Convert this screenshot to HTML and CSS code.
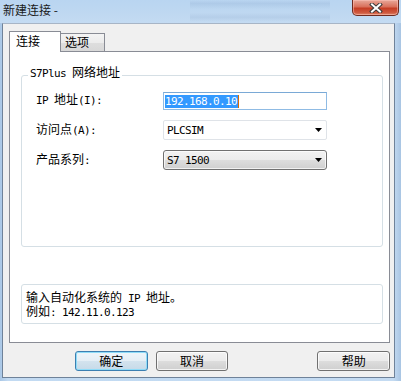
FILE: index.html
```html
<!DOCTYPE html>
<html lang="zh">
<head>
<meta charset="utf-8">
<title>新建连接</title>
<link rel="stylesheet" href="styles.css">
</head>
<body>
<div class="window">
  <div class="titlebar">
    <span class="title">新建连接 -</span>
    <div class="close">
      <svg width="14" height="10" viewBox="0 0 14 10">
        <path d="M3 1.5 L11 8.5 M11 1.5 L3 8.5" stroke="#3b3b3b" stroke-width="4" stroke-linecap="square" fill="none"/>
        <path d="M3 1.5 L11 8.5 M11 1.5 L3 8.5" stroke="#ffffff" stroke-width="2" stroke-linecap="square" fill="none"/>
      </svg>
    </div>
  </div>
  <div class="client">
    <div class="tabs">
      <div class="tab active">连接</div>
      <div class="tab">选项</div>
    </div>
    <div class="panel">
      <fieldset class="group">
        <legend><span class="m">S7Plus </span>网络地址</legend>
        <div class="row first">
          <span class="label"><span class="m">IP </span>地址<span class="m">(I):</span></span>
          <div class="field ip"><span class="sel m">192.168.0.10</span><span class="caret"></span></div>
        </div>
        <div class="row">
          <span class="label">访问点<span class="m">(A):</span></span>
          <div class="field combo"><span class="m">PLCSIM</span>
            <svg class="arrow" width="7" height="4" viewBox="0 0 7 4"><polygon points="0,0 7,0 3.5,4" fill="#000"/></svg>
          </div>
        </div>
        <div class="row">
          <span class="label">产品系列<span class="m">:</span></span>
          <div class="field combo raised"><span class="m">S7 1500</span>
            <svg class="arrow" width="7" height="4" viewBox="0 0 7 4"><polygon points="0,0 7,0 3.5,4" fill="#000"/></svg>
          </div>
        </div>
      </fieldset>
      <div class="info">
        <div class="line">输入自动化系统的<span class="m"> IP </span>地址。</div>
        <div class="line">例如<span class="m">: 142.11.0.123</span></div>
      </div>
    </div>
    <div class="buttons">
      <button class="btn default">确定</button>
      <button class="btn">取消</button>
      <button class="btn help">帮助</button>
    </div>
  </div>
</div>
</body>
</html>
```

FILE: styles.css
```css
* { box-sizing: border-box; }

body {
  margin: 0;
  font-family: "Noto Sans CJK SC", "Noto Sans", sans-serif;
  font-size: 12px;
  color: #000;
}

.m {
  font-family: "DejaVu Sans Mono", "Liberation Mono", monospace;
  font-size: 11px;
  letter-spacing: -0.62px;
}

.window {
  width: 401px;
  height: 381px;
  background: linear-gradient(90deg, #a9c7e6 0%, #c2daf2 2%, #c4dbf2 98%, #a9c5e3 100%);
  display: flex;
  flex-direction: column;
  overflow: hidden;
}

.titlebar {
  height: 23px;
  display: flex;
  justify-content: space-between;
  align-items: flex-start;
  background:
    linear-gradient(180deg, rgba(120,150,190,0) 0%, rgba(120,150,190,0.18) 15%, rgba(120,150,190,0) 40%, rgba(120,150,190,0) 55%, rgba(120,150,190,0.16) 75%, rgba(120,150,190,0) 95%) 190px 0 / 140px 23px no-repeat,
    linear-gradient(180deg, #b9d5f1 0%, #bfd8f1 60%, #c4dbf2 100%);
}

.title {
  padding: 2px 0 0 3px;
  line-height: 16px;
  font-size: 12px;
  color: #1a1a1a;
}

.close {
  width: 47px;
  height: 16px;
  margin-right: 2px;
  border: 1px solid #6e2b20;
  border-top: none;
  border-radius: 0 0 5px 5px;
  background: linear-gradient(180deg, #e8a89a 0%, #d9705b 45%, #c53d24 55%, #cf5a40 85%, #e08a6c 100%);
  display: flex;
  align-items: center;
  justify-content: center;
  box-shadow: inset 0 0 0 1px rgba(255,200,190,0.5);
}

.client {
  margin-left: 2px;
  width: 393px;
  height: 355px;
  background: #f0f0f0;
  border: 1px solid #6f8299;
  border-top-color: #a7b5c6;
  padding: 7px 4px 0 6px;
}

.tabs {
  display: flex;
  align-items: flex-start;
  height: 20px;
  position: relative;
  z-index: 1;
}

.tab {
  height: 18px;
  margin-top: 2px;
  width: 44px;
  border: 1px solid #898c95;
  border-left: none;
  border-bottom: none;
  background: linear-gradient(180deg, #f4f4f4 0%, #ececec 50%, #dedede 51%, #d8d8d8 100%);
  padding-left: 4px;
  line-height: 16px;
}

.tab.active {
  height: 21px;
  margin-top: 0;
  width: 52px;
  border-left: 1px solid #898c95;
  background: #fff;
  padding-left: 6px;
  padding-top: 1px;
  line-height: 16px;
}

.panel {
  width: 381px;
  height: 292px;
  background: #fff;
  border: 1px solid #898c95;
  padding: 14px 6px 0 11px;
}

.group {
  margin: 0;
  border: 1px solid #d5dfe5;
  border-radius: 3px;
  padding: 0 0 76px 0;
  min-width: 0;
}

.group legend {
  margin-left: 6px;
  padding: 0 2px 4px;
  line-height: 12px;
  font-size: 12px;
}

.row {
  display: flex;
  align-items: center;
  height: 20px;
  margin-top: 10px;
  padding-left: 14px;
}

.row.first {
  margin-top: 6px;
}

.label {
  width: 127px;
  line-height: 14px;
}

.field {
  width: 164px;
  height: 20px;
  display: flex;
  align-items: center;
  padding-left: 3px;
  background: #fff;
}

.ip {
  height: 18px;
  align-self: flex-end;
  border: 1px solid #8fbbe4;
  border-top-color: #7aa9d6;
  padding-left: 1px;
}

.sel {
  background: #3399ff;
  color: #fff;
  line-height: 13px;
  height: 13px;
  padding-right: 1px;
}

.caret {
  width: 1px;
  height: 13px;
  background: #d96b00;
}

.combo {
  border: 1px solid #dfe3e8;
  border-radius: 2px;
  justify-content: space-between;
  padding-right: 4px;
}

.combo.raised {
  border: 1px solid #707070;
  border-radius: 3px;
  background: linear-gradient(180deg, #f2f2f2 0%, #ebebeb 50%, #dddddd 51%, #cfcfcf 100%);
  box-shadow: inset 0 0 0 1px rgba(255,255,255,0.7);
}

.arrow {
  display: block;
}

.info {
  margin-top: 37px;
  height: 40px;
  border: 1px solid #d5dfe5;
  border-radius: 3px;
  padding: 5px 0 0 4px;
}

.line {
  height: 14px;
  line-height: 14px;
}

.buttons {
  display: flex;
  margin-top: 8px;
  padding-left: 66px;
}

.btn {
  width: 73px;
  height: 20px;
  font-family: "Noto Sans CJK SC", "Noto Sans", sans-serif;
  font-size: 12px;
  line-height: 16px;
  padding: 0;
  color: #000;
  border: 1px solid #707070;
  border-radius: 3px;
  background: linear-gradient(180deg, #f2f2f2 0%, #ebebeb 50%, #dddddd 51%, #cfcfcf 100%);
  box-shadow: inset 0 0 0 1px rgba(255,255,255,0.75);
  margin-right: 8px;
}

.btn.default {
  border-color: #3c7fb1;
  box-shadow: inset 0 0 0 1px #8fdcf8;
  background: linear-gradient(180deg, #eef5fa 0%, #e4eef5 50%, #d3e3ee 51%, #c6dae8 100%);
}

.btn.help {
  margin-left: 81px;
  margin-right: 0;
}
```
